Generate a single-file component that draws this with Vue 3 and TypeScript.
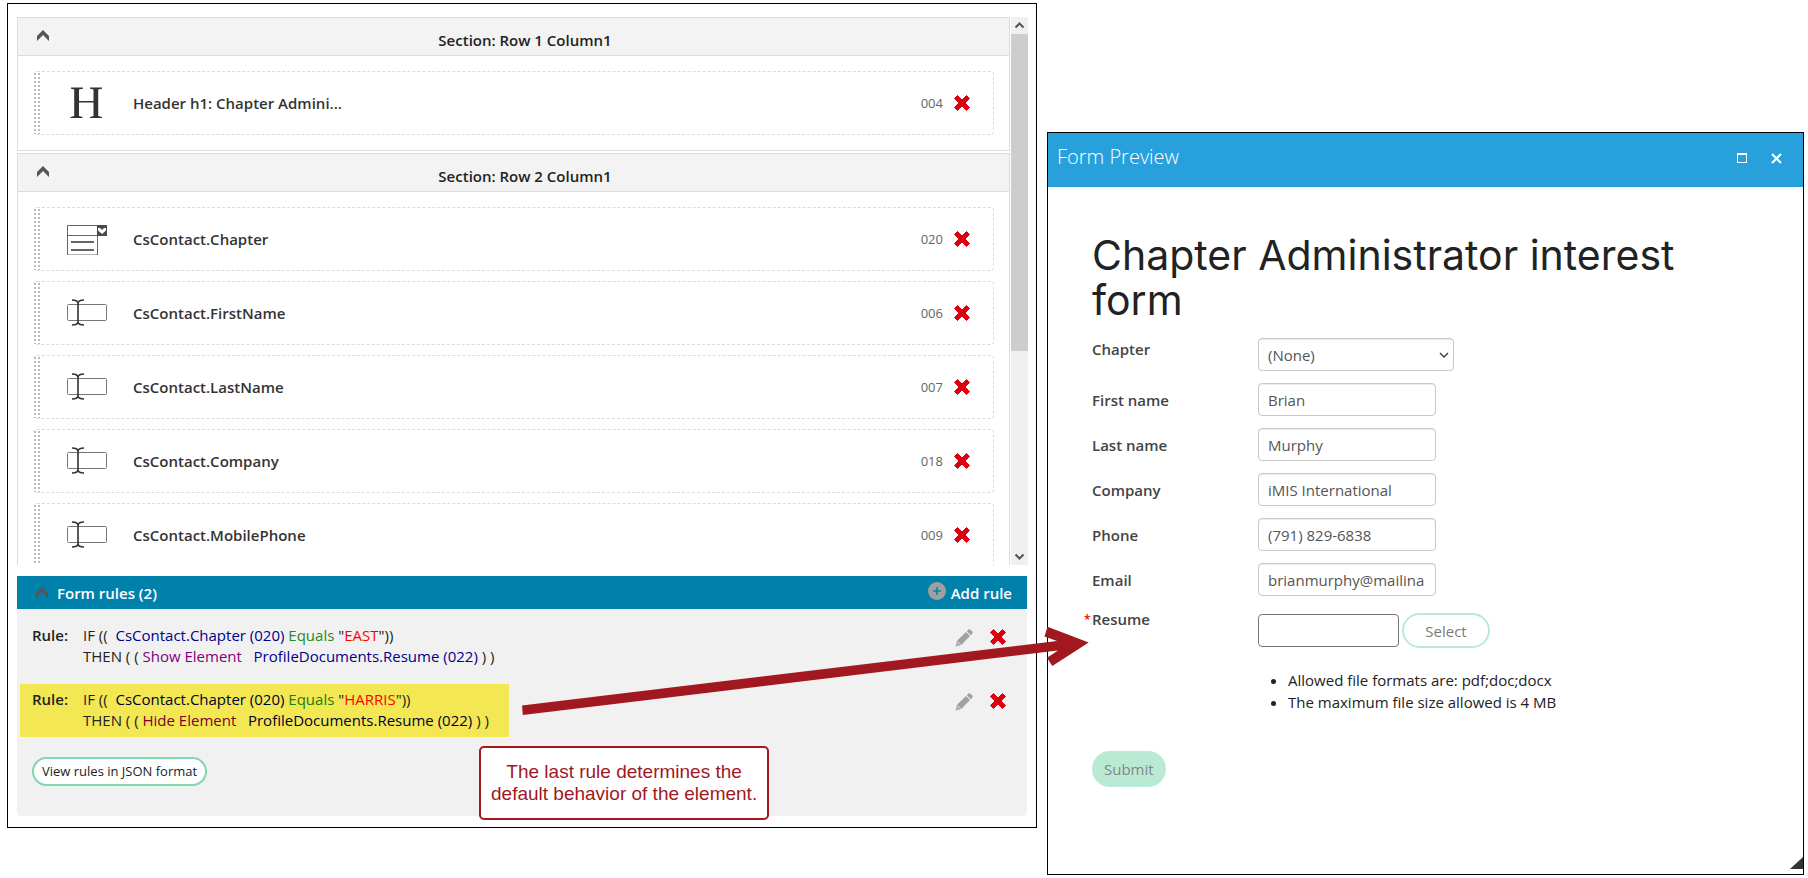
<script setup lang="ts">
import { ref } from 'vue'

type IconKind = 'header' | 'list' | 'text'

interface FormElement {
  label: string
  code: string
  icon: IconKind
}

interface Section {
  title: string
  elements: FormElement[]
}

interface Rule {
  value: string
  action: string
  highlighted: boolean
}

interface TextField {
  id: string
  label: string
  value: string
}

const sections: Section[] = [
  {
    title: 'Section: Row 1 Column1',
    elements: [{ label: 'Header h1: Chapter Admini...', code: '004', icon: 'header' }],
  },
  {
    title: 'Section: Row 2 Column1',
    elements: [
      { label: 'CsContact.Chapter', code: '020', icon: 'list' },
      { label: 'CsContact.FirstName', code: '006', icon: 'text' },
      { label: 'CsContact.LastName', code: '007', icon: 'text' },
      { label: 'CsContact.Company', code: '018', icon: 'text' },
      { label: 'CsContact.MobilePhone', code: '009', icon: 'text' },
    ],
  },
]

const rules: Rule[] = [
  { value: 'EAST', action: 'Show Element', highlighted: false },
  { value: 'HARRIS', action: 'Hide Element', highlighted: true },
]

const chapter = ref('(None)')
const resume = ref('')
const fields = ref<TextField[]>([
  { id: 'first-name', label: 'First name', value: 'Brian' },
  { id: 'last-name', label: 'Last name', value: 'Murphy' },
  { id: 'company', label: 'Company', value: 'iMIS International' },
  { id: 'phone', label: 'Phone', value: '(791) 829-6838' },
  { id: 'email', label: 'Email', value: 'brianmurphy@mailina' },
])
</script>

<template>
  <main class="page">
    <section class="panel builder">
      <div class="canvas">
        <div class="canvas-list">
          <section v-for="section in sections" :key="section.title" class="section">
            <header class="section-head">
              <button class="icon-btn" type="button" aria-label="Collapse section">
                <svg class="chevron" viewBox="0 0 12 11"><path d="M6 0 12 6V11L6 5 0 11V6Z" fill="#555" /></svg>
              </button>
              <h2>{{ section.title }}</h2>
            </header>
            <div class="section-body">
              <article v-for="el in section.elements" :key="el.code" class="element">
                <span class="handle"></span>
                <svg v-if="el.icon === 'header'" class="kind" viewBox="0 0 40 32">
                  <path
                    d="M4 0.5H16V1.7L12 2.5V14H26.500V2.500L23 1.700V0.500H35V1.700L31.200 2.500V29L35 30V31H23V30L26.500 29V15.600H12V29L15.500 30V31H3.500V30L7.200 29V2.500L4 1.700Z"
                    fill="#333"
                  />
                </svg>
                <svg v-else-if="el.icon === 'list'" class="kind" viewBox="0 -2 40 32">
                  <path d="M0.500 0.500H30.500V30H0.500ZM0.500 10.500H30" fill="none" stroke="#666" />
                  <path d="M4 17H27M4 25H27" stroke="#666" stroke-width="2" />
                  <rect x="30" width="10" height="11" fill="#4a4a4a" />
                  <path d="M31 3 33 3 35 5 37 3 39 3V5.500L35 9 31 5.500Z" fill="#fff" />
                </svg>
                <svg v-else class="kind" viewBox="0 1 40 32">
                  <rect x="0.500" y="8.500" width="39" height="16" rx="1" fill="none" stroke="#777" />
                  <path
                    d="M5 4Q11 4 11 7.500 11 4 17 4M11 6V27M5 29Q11 29 11 25.500 11 29 17 29"
                    fill="none"
                    stroke="#333"
                    stroke-width="1.600"
                  />
                </svg>
                <span class="element-label">{{ el.label }}</span>
                <span class="element-code">{{ el.code }}</span>
                <button class="icon-btn" type="button" :aria-label="`Delete ${el.label}`">
                  <svg class="cross" viewBox="0 0 16 16">
                    <path d="M3.500 0.500 8 5 12.500 0.500 15.500 3.500 11 8 15.500 12.500 12.500 15.500 8 11 3.500 15.500 0.500 12.500 5 8 0.500 3.500Z" fill="#dc000f" stroke="#dc000f" stroke-linejoin="round" />
                  </svg>
                </button>
              </article>
            </div>
          </section>
        </div>
        <div class="scrollbar">
          <svg viewBox="0 0 17 17"><path d="M4.500 10.500 8.500 6.500 12.500 10.500" /></svg>
          <span class="thumb"></span>
          <svg viewBox="0 0 17 17"><path d="M4.500 6.500 8.500 10.500 12.500 6.500" /></svg>
        </div>
      </div>

      <section class="rules">
        <header class="rules-head">
          <button class="icon-btn" type="button" aria-label="Collapse form rules">
            <svg class="chevron" viewBox="0 0 12 11"><path d="M6 0 12 6V11L6 5 0 11V6Z" fill="#555" /></svg>
          </button>
          <h2>Form rules (2)</h2>
          <button class="add-rule" type="button">
            <svg viewBox="0 0 18 18">
              <circle cx="9" cy="9" r="9" fill="#a0a0a0" />
              <path d="M9 5V13M5 9H13" stroke="#0081ab" stroke-width="1.500" />
            </svg>
            <span>Add rule</span>
          </button>
        </header>
        <div class="rules-body">
          <div v-for="rule in rules" :key="rule.value" class="rule" :class="{ highlighted: rule.highlighted }">
            <div class="rule-text">
              <strong>Rule:</strong>
              <div>
                <p>IF ((&nbsp; <span class="field">CsContact.Chapter (020)</span> <span class="operator">Equals</span> "<span class="value">{{ rule.value }}</span>"))</p>
                <p>THEN ( ( <span class="action">{{ rule.action }}</span>&nbsp;&nbsp; <span class="field">ProfileDocuments.Resume (022)</span> ) )</p>
              </div>
            </div>
            <div class="rule-tools">
              <button class="icon-btn" type="button" aria-label="Edit rule">
                <svg class="pencil" viewBox="0 0 18 18">
                  <path d="M1.800 12.200 5.800 16.200 0.500 17.500Z" fill="#a0a0a0" />
                  <path d="M2 11.700 11 3 15 7 6.300 16Z" fill="#a0a0a0" />
                  <path d="M11.800 2.200 13.200 0.800Q14.500 -0.300 16 1.200L16.800 2Q18.300 3.500 17 4.900L15.800 6.200Z" fill="#a0a0a0" />
                  <path d="M1.500 14.500 3.500 16.500" stroke="#f1f1f1" stroke-width="0.800" />
                </svg>
              </button>
              <button class="icon-btn" type="button" aria-label="Delete rule">
                <svg class="cross" viewBox="0 0 16 16">
                  <path d="M3.500 0.500 8 5 12.500 0.500 15.500 3.500 11 8 15.500 12.500 12.500 15.500 8 11 3.500 15.500 0.500 12.500 5 8 0.500 3.500Z" fill="#dc000f" stroke="#dc000f" stroke-linejoin="round" />
                </svg>
              </button>
            </div>
          </div>
          <button class="json-btn" type="button">View rules in JSON format</button>
        </div>
      </section>
    </section>

    <section class="panel preview">
      <header class="preview-head">
        <h2>Form Preview</h2>
        <button class="icon-btn" type="button" aria-label="Maximize">
          <svg class="maximize" viewBox="0 0 10 10"><path d="M0 0H10V10H0ZM1 2V9H9V2Z" fill="#fff" fill-rule="evenodd" /></svg>
        </button>
        <button class="icon-btn" type="button" aria-label="Close">
          <svg class="close" viewBox="0 0 11 11"><path d="M1 1 10 10M10 1 1 10" stroke="#fff" stroke-width="2.200" /></svg>
        </button>
      </header>
      <form class="preview-body" @submit.prevent>
        <h1>Chapter Administrator interest form</h1>
        <div class="row top">
          <label for="chapter">Chapter</label>
          <div class="select-wrap">
            <select id="chapter" v-model="chapter">
              <option>(None)</option>
            </select>
            <svg class="caret" viewBox="0 0 10 6"><path d="M1 1 5 5 9 1" fill="none" stroke="#444" stroke-width="1.500" /></svg>
          </div>
        </div>
        <div v-for="field in fields" :key="field.id" class="row">
          <label :for="field.id">{{ field.label }}</label>
          <input :id="field.id" v-model="field.value" type="text" />
        </div>
        <div class="row top">
          <label for="resume" class="required">Resume</label>
          <div class="upload">
            <div class="upload-line">
              <input id="resume" v-model="resume" type="text" />
              <button class="select-btn" type="button">Select</button>
            </div>
            <ul>
              <li>Allowed file formats are: pdf;doc;docx</li>
              <li>The maximum file size allowed is 4 MB</li>
            </ul>
          </div>
        </div>
        <button class="submit-btn" type="submit">Submit</button>
      </form>
      <svg class="grip" viewBox="0 0 13 12"><path d="M13 0V12H0Z" fill="#333" /></svg>
    </section>

    <svg class="arrow" viewBox="0 0 568 90">
      <path
        d="M0 79.500 535 15 522.500 10.500 525.500 0.700 566.700 16.500 530.300 40 525 31.700 536 24.500 0.800 89Z"
        fill="#a1181f"
      />
    </svg>
    <p class="callout">The last rule determines the<br />default behavior of the element.</p>
  </main>
</template>

<style>
body {
  margin: 0;
  background: #fff;
}
</style>

<style scoped>
.page {
  position: relative;
  display: grid;
  grid-template-columns: minmax(0, 1030fr) minmax(0, 757fr);
  align-items: start;
  gap: 10px;
  padding: 3px 4px 3px 7px;
  font: 15px/22px 'Open Sans', 'Noto Sans', sans-serif;
  color: #222;
}
.page *,
.page {
  box-sizing: border-box;
}
h1,
h2,
p,
ul {
  margin: 0;
}
h2 {
  font-size: 15px;
  line-height: 22px;
  font-weight: 600;
}
svg {
  display: block;
  flex: none;
}
button,
input,
select {
  font: inherit;
  margin: 0;
}
.icon-btn {
  padding: 0;
  border: 0;
  background: none;
}
.panel {
  border: 1px solid #000;
  background: #fff;
}
.builder {
  padding: 13px 8px 11px 9px;
}
.canvas {
  display: flex;
  gap: 1px;
  height: 548px;
}
.canvas-list {
  flex: 1;
  min-width: 0;
  overflow-y: auto;
  scrollbar-width: none;
  display: flex;
  flex-direction: column;
  gap: 2px;
}
.section {
  flex: none;
  border: 1px solid #dcdcdc;
}
.section-head {
  display: flex;
  align-items: center;
  height: 38px;
  padding: 0 8px 0 19px;
  background: #f3f3f3;
  border-bottom: 1px solid #dcdcdc;
}
.section-head h2 {
  flex: 1;
  padding-top: 6px;
  text-align: center;
}
.chevron {
  width: 12px;
  height: 11px;
}
.section-head .icon-btn {
  padding-bottom: 2px;
}
.section-body {
  display: flex;
  flex-direction: column;
  gap: 10px;
  padding: 15px;
}
.element {
  display: flex;
  align-items: center;
  height: 64px;
  padding-right: 23px;
  border: 1px dashed #dcdcdc;
  border-left: 0;
  border-radius: 4px;
}
.handle {
  align-self: stretch;
  width: 6px;
  margin: 1px 27px 0 1px;
  background: conic-gradient(from 270deg at 2px 2px, #bbb 90deg, transparent 0) 0 0 / 4px 4px;
}
.kind {
  width: 40px;
  height: 32px;
}
.element-label {
  flex: 1;
  margin-left: 26px;
  font-weight: 600;
  color: #333;
}
.element-code {
  margin-right: 11px;
  font-size: 13px;
  color: #666;
}
.cross {
  width: 16px;
  height: 16px;
}
.scrollbar {
  display: flex;
  flex-direction: column;
  width: 17px;
  background: #f0f0f0;
}
.scrollbar svg {
  width: 17px;
  height: 17px;
  fill: none;
  stroke: #555;
  stroke-width: 2px;
}
.thumb {
  height: 317px;
  margin-bottom: auto;
  background: #cdcdcd;
}
.rules {
  margin: 11px 1px 0 0;
}
.rules-head {
  display: flex;
  align-items: center;
  gap: 9px;
  height: 33px;
  padding: 0 15px 0 19px;
  background: #0081ab;
  color: #fff;
}
.add-rule {
  display: flex;
  gap: 5px;
  margin-left: auto;
  padding: 0;
  border: 0;
  background: none;
  color: #fff;
  font-weight: 600;
}
.add-rule svg {
  width: 18px;
  height: 18px;
}
.rules-body {
  display: flex;
  flex-direction: column;
  gap: 11px;
  padding: 11px 21px 30px 3px;
  background: #f1f1f1;
  border-radius: 4px;
}
.rule {
  display: flex;
  justify-content: space-between;
  line-height: 21px;
}
.rule-text {
  display: flex;
  padding: 5px 20px 6px 12px;
  white-space: nowrap;
}
.rule-text strong {
  width: 51px;
  font-weight: 600;
}
.rule-tools {
  display: flex;
  align-items: flex-start;
  gap: 17px;
  padding-top: 9px;
}
.pencil {
  width: 18px;
  height: 18px;
}
.field {
  color: #00008b;
}
.operator {
  color: #228b22;
}
.value {
  color: #f00;
}
.action {
  color: #800080;
}
.highlighted .rule-text {
  background: #f3e854;
}
.highlighted .field {
  color: #00002d;
}
.highlighted .operator {
  color: #207e0b;
}
.highlighted .action {
  color: #7a002a;
}
.json-btn {
  align-self: flex-start;
  margin: 9px 0 0 12px;
  height: 29px;
  padding: 0 8px 2px;
  border: 2px solid #7fd8ae;
  border-radius: 15px;
  background: #fff;
  color: #222;
  font-size: 13px;
}
.preview {
  position: relative;
  margin-top: 129px;
}
.preview-head {
  display: flex;
  align-items: center;
  gap: 24px;
  height: 54px;
  padding: 0 21px 4px 9px;
  background: #27a0dc;
}
.preview-head h2 {
  flex: 1;
  padding-bottom: 2px;
  color: #fff;
  font-size: 20px;
  font-weight: 300;
}
.maximize {
  width: 10px;
  height: 10px;
}
.close {
  width: 11px;
  height: 11px;
}
.preview-body {
  display: flex;
  flex-direction: column;
  align-items: flex-start;
  gap: 12px;
  padding: 46px 44px 87px;
}
h1 {
  margin-bottom: 3px;
  font: 400 41px/45px Inter, sans-serif;
}
.row {
  display: flex;
  align-items: center;
}
.row.top {
  align-items: flex-start;
}
label {
  position: relative;
  width: 166px;
  font-weight: 600;
  color: #444;
}
.required::before {
  content: '*';
  position: absolute;
  left: -8px;
  top: 1px;
  font-size: 12px;
  color: #f00;
}
input,
select {
  display: block;
  width: 178px;
  height: 33px;
  padding: 0 9px;
  border: 1px solid #c8c8c8;
  border-radius: 4px;
  background: #fff;
  box-shadow: inset 0 1px 1px rgba(0, 0, 0, 0.08);
  color: #555;
}
.select-wrap {
  position: relative;
}
select {
  width: 196px;
  appearance: none;
}
.caret {
  position: absolute;
  right: 5px;
  top: 14px;
  width: 10px;
  height: 6px;
  pointer-events: none;
}
.upload {
  padding-top: 5px;
}
.upload-line {
  display: flex;
  align-items: center;
  gap: 3px;
}
.upload-line input {
  width: 141px;
  border-color: #767676;
  box-shadow: none;
}
.select-btn {
  width: 88px;
  height: 35px;
  border: 2px solid #b9ebd4;
  border-radius: 18px;
  background: #fff;
  color: #7a7a7a;
}
ul {
  margin-top: 21px;
  padding-left: 30px;
}
.submit-btn {
  margin-top: 26px;
  height: 36px;
  padding: 0 12px;
  border: 0;
  border-radius: 18px;
  background: #b9ebd4;
  color: #858585;
}
.grip {
  position: absolute;
  right: 0;
  bottom: 5px;
  width: 13px;
  height: 12px;
}
.arrow {
  position: absolute;
  left: 522px;
  top: 626px;
  width: 568px;
  height: 90px;
  pointer-events: none;
}
.callout {
  position: absolute;
  left: 479px;
  top: 746px;
  padding: 13px 10px;
  border: 2px solid #a1181f;
  border-radius: 5px;
  background: #fff;
  color: #a1181f;
  font: 19px/22px 'Liberation Sans', Arial, sans-serif;
  text-align: center;
  white-space: nowrap;
}
</style>
